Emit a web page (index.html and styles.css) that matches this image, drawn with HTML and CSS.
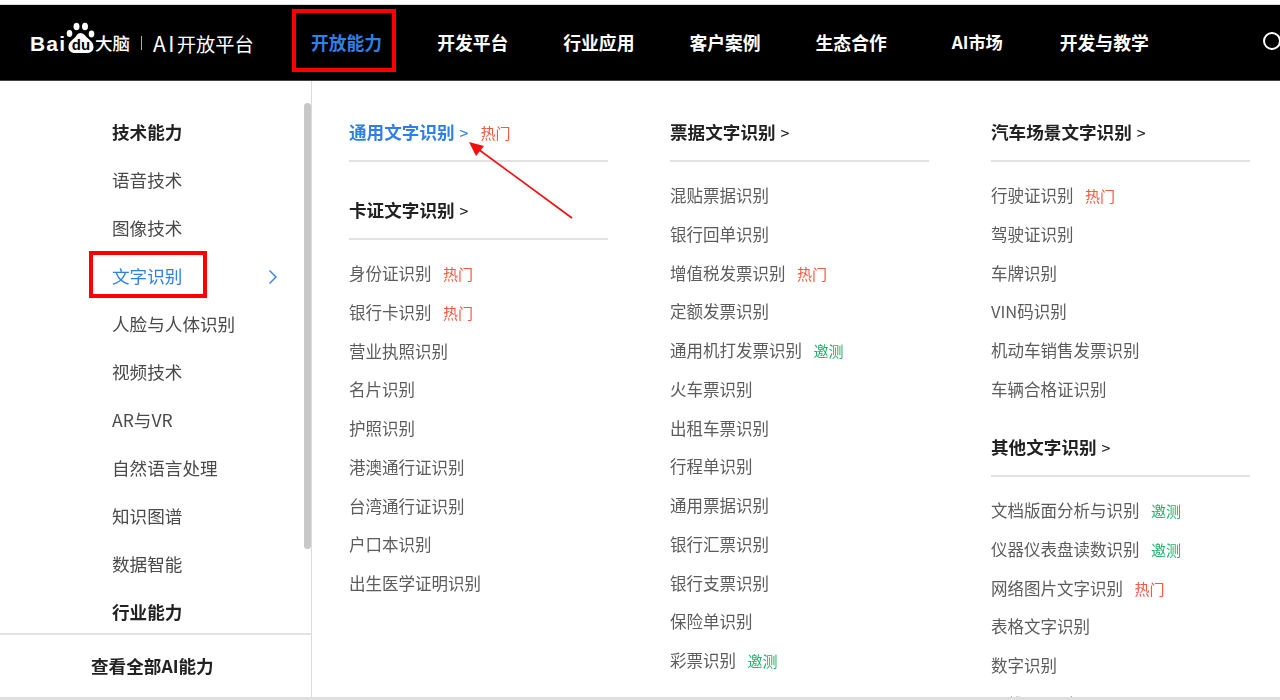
FILE: index.html
```html
<!DOCTYPE html>
<html lang="zh-CN">
<head>
<meta charset="utf-8">
<title>AI开放平台</title>
<link rel="stylesheet" href="styles.css">
</head>
<body>
<div class="page">
  <header class="header">
    <div class="logo">
      <span class="logo-bai">Bai</span>
      <span class="logo-paw">
        <svg width="30" height="32" viewBox="0 0 30 32" aria-hidden="true">
          <ellipse cx="3.500" cy="11.500" rx="2.800" ry="3.400" fill="#fff"/>
          <ellipse cx="10.500" cy="4.500" rx="3" ry="3.800" fill="#fff"/>
          <ellipse cx="19" cy="4.500" rx="3" ry="3.800" fill="#fff"/>
          <ellipse cx="25.500" cy="12" rx="2.800" ry="3.400" fill="#fff"/>
          <path d="M14.500 11c-3 0-4 3-6 5-2 2-6 4-6 9 0 4 3 6 7 6h11c4 0 7-2 7-6 0-5-4-7-6-9-2-2-4-5-7-5z" fill="#fff"/>
        </svg>
        <span class="logo-du">du</span>
      </span>
      <span class="logo-cn">大脑</span>
      <span class="logo-sep"></span>
      <span class="logo-ai"><span class="logo-ai-en">AI</span>开放平台</span>
    </div>
    <nav class="nav">
      <a class="nav-item nav-active">开放能力</a>
      <a class="nav-item">开发平台</a>
      <a class="nav-item">行业应用</a>
      <a class="nav-item">客户案例</a>
      <a class="nav-item">生态合作</a>
      <a class="nav-item nav-market">AI市场</a>
      <a class="nav-item">开发与教学</a>
    </nav>
    <span class="search"></span>
    <span class="mark mark-nav"></span>
  </header>

  <main class="main">
    <aside class="side">
      <div class="side-list">
        <div class="side-item side-head">技术能力</div>
        <div class="side-item">语音技术</div>
        <div class="side-item">图像技术</div>
        <div class="side-item side-active">文字识别
          <svg class="side-chev" width="10" height="16" viewBox="0 0 10 16" aria-hidden="true"><path d="M1.5 1.5 8 8l-6.500 6.500" fill="none" stroke="#2f7fe8" stroke-width="1.400"/></svg>
        </div>
        <div class="side-item">人脸与人体识别</div>
        <div class="side-item">视频技术</div>
        <div class="side-item">AR与VR</div>
        <div class="side-item">自然语言处理</div>
        <div class="side-item">知识图谱</div>
        <div class="side-item">数据智能</div>
        <div class="side-item side-head">行业能力</div>
      </div>
      <div class="side-foot">查看全部AI能力</div>
      <span class="scroll"></span>
      <span class="mark mark-side"></span>
    </aside>

    <section class="cols">
      <div class="col">
        <div class="col-head col-head-blue">通用文字识别 <span class="gt">&gt;</span><span class="tag hot tag-head">热门</span></div>
        <div class="col-head">卡证文字识别 <span class="gt">&gt;</span></div>
        <ul class="items">
          <li>身份证识别<span class="tag hot">热门</span></li>
          <li>银行卡识别<span class="tag hot">热门</span></li>
          <li>营业执照识别</li>
          <li>名片识别</li>
          <li>护照识别</li>
          <li>港澳通行证识别</li>
          <li>台湾通行证识别</li>
          <li>户口本识别</li>
          <li>出生医学证明识别</li>
        </ul>
      </div>
      <div class="col">
        <div class="col-head">票据文字识别 <span class="gt">&gt;</span></div>
        <ul class="items">
          <li>混贴票据识别</li>
          <li>银行回单识别</li>
          <li>增值税发票识别<span class="tag hot">热门</span></li>
          <li>定额发票识别</li>
          <li>通用机打发票识别<span class="tag test">邀测</span></li>
          <li>火车票识别</li>
          <li>出租车票识别</li>
          <li>行程单识别</li>
          <li>通用票据识别</li>
          <li>银行汇票识别</li>
          <li>银行支票识别</li>
          <li>保险单识别</li>
          <li>彩票识别<span class="tag test">邀测</span></li>
        </ul>
      </div>
      <div class="col">
        <div class="col-head">汽车场景文字识别 <span class="gt">&gt;</span></div>
        <ul class="items">
          <li>行驶证识别<span class="tag hot">热门</span></li>
          <li>驾驶证识别</li>
          <li>车牌识别</li>
          <li>VIN码识别</li>
          <li>机动车销售发票识别</li>
          <li>车辆合格证识别</li>
        </ul>
        <div class="col-head col-head-other">其他文字识别 <span class="gt">&gt;</span></div>
        <ul class="items">
          <li>文档版面分析与识别<span class="tag test">邀测</span></li>
          <li>仪器仪表盘读数识别<span class="tag test">邀测</span></li>
          <li>网络图片文字识别<span class="tag hot">热门</span></li>
          <li>表格文字识别</li>
          <li>数字识别</li>
          <li>二维码识别</li>
        </ul>
      </div>
    </section>

    <svg class="arrow" width="120" height="90" viewBox="0 0 120 90" aria-hidden="true">
      <path d="M112 80 18 11" stroke="#f40f0f" stroke-width="1.700" fill="none"/>
      <path d="M9 4 24 8 16 18z" fill="#f40f0f"/>
    </svg>
  </main>
</div>
</body>
</html>
```

FILE: styles.css
```css
* { box-sizing: border-box; }
html, body { margin: 0; padding: 0; height: 100%; background: #fff; overflow: hidden; }
body { font-family: "Noto Sans CJK SC", "Liberation Sans", sans-serif; color: #333; }
ul { list-style: none; margin: 0; padding: 0; }

.page { height: 700px; display: flex; flex-direction: column; padding-top: 4px; border-bottom: 3px solid #dedede; overflow: hidden; filter: blur(0.35px); }

.header { position: relative; flex: none; height: 77px; background: #000; border-top: 1px solid #ddd; border-bottom: 1px solid #444; display: flex; align-items: center; padding-left: 30px; overflow: hidden; }
.logo { display: flex; align-items: center; color: #fff; width: 281px; flex: none; height: 40px; }
.logo-bai { font-family: "Liberation Sans", sans-serif; font-weight: 700; font-size: 21px; letter-spacing: 1.200px; width: 36px; flex: none; margin-top: 3px; }
.logo-paw { position: relative; width: 30px; height: 32px; margin: -10px 0 0 0; flex: none; }
.logo-paw svg { display: block; }
.logo-du { position: absolute; left: 4px; top: 15px; width: 22px; text-align: center; font-family: "Liberation Sans", sans-serif; font-weight: 700; font-size: 15px; line-height: 15px; color: #000; }
.logo-cn { font-size: 17.500px; font-weight: 500; margin-left: -1px; }
.logo-sep { width: 1px; height: 14px; background: #aaa; margin: 0 11px; }
.logo-ai { font-size: 19.250px; white-space: nowrap; }
.logo-ai-en { font-size: 21px; letter-spacing: 2.400px; }

.nav { display: flex; align-items: center; gap: 55px; font-size: 17.800px; font-weight: 700; color: #fff; margin-top: -2px; }
.nav-item { display: block; white-space: nowrap; }
.nav-active { color: #2f7fe8; }
.nav-market { margin-left: 10px; margin-right: 2px; font-size: 17.200px; font-weight: 700; }
.search { position: absolute; left: 1263px; top: 27px; width: 18px; height: 18px; border: 2px solid #fff; border-radius: 50%; }

.mark { position: absolute; border: 4px solid #f00; }
.mark-nav { left: 292px; top: 4px; width: 104px; height: 63px; }
.mark-side { left: 89px; top: 170px; width: 118px; height: 47px; }

.main { position: relative; flex: 1; min-height: 0; display: flex; overflow: hidden; }

.side { position: relative; flex: none; width: 312px; border-right: 1px solid #dcdcdc; display: flex; flex-direction: column; }
.side-list { flex: 1; padding: 27px 0 0 112px; overflow: hidden; }
.side-item { position: relative; height: 48px; line-height: 48px; font-size: 17.600px; color: #4a4a4a; white-space: nowrap; }
.side-head { font-weight: 700; color: #222; }
.side-active { color: #2f7fe8; }
.side-chev { position: absolute; left: 156px; top: 17px; }
.side-foot { flex: none; height: 64px; border-top: 2px solid #e2e2e2; padding-left: 91px; line-height: 62px; font-size: 17.600px; font-weight: 700; color: #222; }
.scroll { position: absolute; left: 304px; top: 22px; width: 7px; height: 446px; border-radius: 4px; background: #c8c8c8; }

.cols { flex: 1; display: flex; padding: 28px 0 0 37px; gap: 62.500px; align-items: flex-start; }
.col { flex: none; width: 258.500px; }
.col-head { height: 53px; line-height: 46px; border-bottom: 2px solid #e2e2e2; margin-bottom: 14px; font-size: 17.600px; font-weight: 700; color: #222; white-space: nowrap; }
.col-head-blue { color: #2f7fe8; margin-bottom: 25px; }
.col-head-other { margin-top: 15.500px; }
.gt { font-weight: 400; font-size: 16px; margin-left: 1px; }
.items li { height: 38.750px; line-height: 38.750px; font-size: 16.500px; color: #5c5c5c; white-space: nowrap; }
.tag { margin-left: 11.500px; font-size: 15px; }
.hot { color: #f8593b; }
.test { color: #1fb36b; }
.tag-head { font-weight: 400; margin-left: 12px; }

.arrow { position: absolute; left: 460px; top: 57px; }
```
